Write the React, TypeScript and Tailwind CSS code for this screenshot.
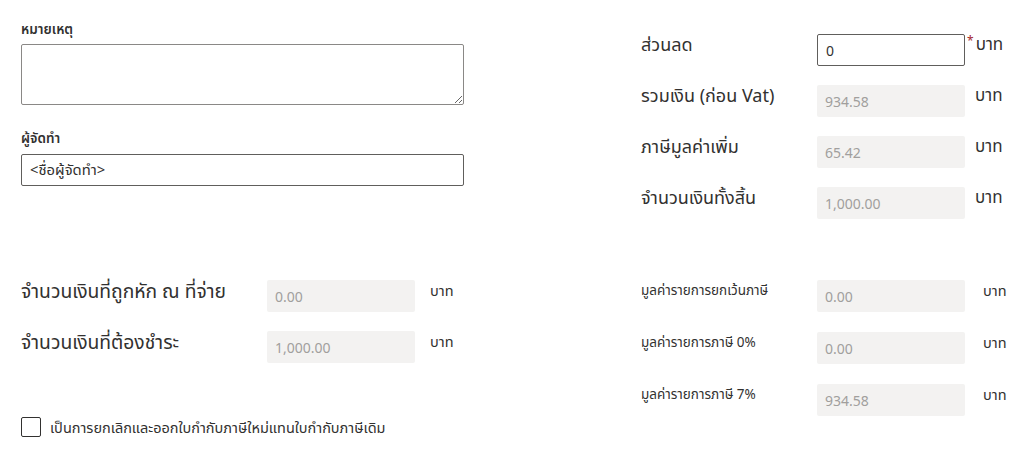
import React from "react";

const font = { fontFamily: '"Noto Sans", "Noto Sans Thai", "Leelawadee UI", sans-serif' };

const TOTALS = [
  { label: "รวมเงิน (ก่อน Vat)", value: "934.58" },
  { label: "ภาษีมูลค่าเพิ่ม", value: "65.42" },
  { label: "จำนวนเงินทั้งสิ้น", value: "1,000.00" },
];

const TAX_ROWS = [
  { label: "มูลค่ารายการยกเว้นภาษี", value: "0.00" },
  { label: "มูลค่ารายการภาษี 0%", value: "0.00" },
  { label: "มูลค่ารายการภาษี 7%", value: "934.58" },
];

const ReadOnlyBox = ({ value }: { value: string }) => (
  <div className="w-[148px] h-[32px] shrink-0 bg-[#f3f2f1] rounded-[2px] flex items-center px-2 text-[14px] text-[#a19f9d]">
    {value}
  </div>
);

export default function App() {
  return (
    <div className="w-[1024px] h-[476px] bg-white text-[#323130] pl-[21px] pt-[19px] flex flex-col" style={font}>
      {/* Top */}
      <div className="flex">
        <div className="w-[443px] shrink-0 flex flex-col">
          <label className="text-[13.5px] font-semibold leading-[20px] mb-[5px]">หมายเหตุ</label>
          <textarea className="w-[443px] h-[61px] border border-[#8a8886] rounded-[2px] resize-y outline-none px-2 py-1 text-[14px]" />
          <label className="text-[13.5px] font-semibold leading-[20px] mt-[23px] mb-[6px]">ผู้จัดทำ</label>
          <input
            className="w-[443px] h-[32px] border border-[#605e5c] rounded-[2px] px-2 text-[14.8px] text-[#323130] outline-none"
            defaultValue="<ชื่อผู้จัดทำ>"
          />
        </div>

        <div className="ml-[177px] shrink-0 flex flex-col gap-[20px] pt-[15px]">
          <div className="flex items-start h-[31px]">
            <span className="w-[176px] text-[18px] leading-[24px] -mt-[2px]">ส่วนลด</span>
            <input
              className="w-[148px] h-[32px] border border-[#605e5c] rounded-[2px] px-2 text-[14px] outline-none"
              defaultValue="0"
            />
            <span className="text-[#a4262c] text-[12px] leading-[12px] ml-[2px] mt-[1px]">*</span>
            <span className="text-[17px] leading-[24px] ml-[2px] -mt-[2px]">บาท</span>
          </div>
          {TOTALS.map((r) => (
            <div key={r.label} className="flex items-start h-[31px]">
              <span className="w-[176px] text-[18px] leading-[24px] -mt-[2px]">{r.label}</span>
              <ReadOnlyBox value={r.value} />
              <span className="text-[17px] leading-[24px] ml-[10px] -mt-[2px]">บาท</span>
            </div>
          ))}
        </div>
      </div>

      {/* Bottom */}
      <div className="flex mt-[62px]">
        <div className="w-[443px] shrink-0 flex flex-col gap-[19px]">
          {[
            { label: "จำนวนเงินที่ถูกหัก ณ ที่จ่าย", value: "0.00" },
            { label: "จำนวนเงินที่ต้องชำระ", value: "1,000.00" },
          ].map((r) => (
            <div key={r.label} className="flex items-start h-[32px]">
              <span className="w-[246px] shrink-0 text-[19.3px] leading-[24px] -mt-[1px] whitespace-nowrap">{r.label}</span>
              <ReadOnlyBox value={r.value} />
              <span className="text-[14.5px] leading-[20px] ml-[15px]">บาท</span>
            </div>
          ))}
        </div>

        <div className="ml-[177px] shrink-0 flex flex-col gap-[20px]">
          {TAX_ROWS.map((r) => (
            <div key={r.label} className="flex items-start h-[32px]">
              <span className="w-[176px] shrink-0 text-[13.5px] leading-[20px]">{r.label}</span>
              <ReadOnlyBox value={r.value} />
              <span className="text-[14.5px] leading-[20px] ml-[18px]">บาท</span>
            </div>
          ))}
        </div>
      </div>

      {/* Checkbox */}
      <label className="flex items-center gap-[9px] mt-[1px]">
        <span className="w-[20px] h-[20px] border border-[#323130] rounded-[2px] shrink-0" />
        <span className="text-[14.5px] leading-[20px]">เป็นการยกเลิกและออกใบกำกับภาษีใหม่แทนใบกำกับภาษีเดิม</span>
      </label>
    </div>
  );
}
